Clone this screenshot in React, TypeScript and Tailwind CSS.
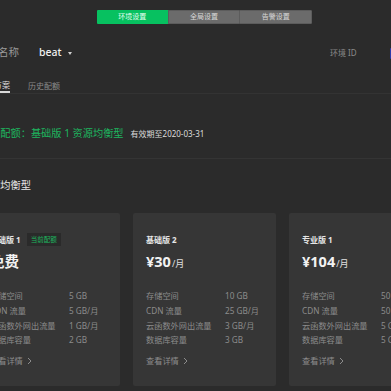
const font = '[font-family:"Noto_Sans","Noto_Sans_CJK_SC",sans-serif]'

type Plan = {
  name: string
  price: string
  unit?: string
  current?: boolean
  specs: [string, string][]
}

const plans: Plan[] = [
  {
    name: '基础版 1',
    price: '免费',
    current: true,
    specs: [
      ['存储空间', '5 GB'],
      ['CDN 流量', '5 GB/月'],
      ['云函数外网出流量', '1 GB/月'],
      ['数据库容量', '2 GB'],
    ],
  },
  {
    name: '基础版 2',
    price: '¥30',
    unit: '/月',
    specs: [
      ['存储空间', '10 GB'],
      ['CDN 流量', '25 GB/月'],
      ['云函数外网出流量', '3 GB/月'],
      ['数据库容量', '3 GB'],
    ],
  },
  {
    name: '专业版 1',
    price: '¥104',
    unit: '/月',
    specs: [
      ['存储空间', '50 GB'],
      ['CDN 流量', '50 GB/月'],
      ['云函数外网出流量', '5 GB/月'],
      ['数据库容量', '5 GB'],
    ],
  },
]

function PlanCard({ plan }: { plan: Plan }) {
  return (
    <div className="w-[143px] h-[173px] shrink-0 rounded-[2px] bg-[#363636] px-[13px] pt-[20px]">
      {/* title + badge */}
      <div className="flex h-[13px] items-center gap-[6px]">
        <span className="text-[8px] font-bold text-[#e6e6e6]">{plan.name}</span>
        {plan.current && (
          <span className="flex h-[13px] items-center bg-[#2a2a2a] px-[4px] text-[6.5px] text-[#1db65f]">
            当前配额
          </span>
        )}
      </div>

      {/* price */}
      <div className="mt-[5px] flex h-[20px] items-baseline">
        <span className="text-[14.5px] font-bold leading-[20px] text-[#f2f2f2]">{plan.price}</span>
        {plan.unit && <span className="ml-[1px] text-[9px] text-[#e0e0e0]">{plan.unit}</span>}
      </div>

      {/* specs */}
      <div className="mt-[18px]">
        {plan.specs.map(([k, v]) => (
          <div key={k} className="flex h-[14.7px] items-center text-[8.2px] text-[#8c8c8c]">
            <span className="w-[79px] shrink-0 whitespace-nowrap">{k}</span>
            <span className="whitespace-nowrap">{v}</span>
          </div>
        ))}
      </div>

      <div className="mt-[6px] flex h-[14px] items-center gap-[4px] text-[8.2px] text-[#8c8c8c]">
        查看详情
        <svg width="5" height="8" viewBox="0 0 5 8" fill="none" stroke="#8c8c8c" strokeWidth="1">
          <path d="M1 1l3 3-3 3" />
        </svg>
      </div>
    </div>
  )
}

export default function App() {
  return (
    <div className={`w-[391px] h-[391px] overflow-hidden bg-[#2b2b2b] ${font}`}>
      {/* segmented control */}
      <div className="pl-[97px] pt-[10px]">
        <div className="flex h-[14px] w-[215px] text-[7px]">
          <div className="flex flex-1 items-center justify-center rounded-l-[1px] bg-[#07c160] text-[#e8fff1]">
            环境设置
          </div>
          <div className="flex flex-1 items-center justify-center border-y border-l border-[#5c5c5c] bg-[#6b6b6b] text-[#d8d8d8]">
            全局设置
          </div>
          <div className="flex flex-1 items-center justify-center rounded-r-[1px] border border-[#5c5c5c] bg-[#6b6b6b] text-[#d8d8d8]">
            告警设置
          </div>
        </div>
      </div>

      {/* name row */}
      <div className="mt-[19px] flex h-[20px] w-[460px] items-center whitespace-nowrap -ml-[23px]">
        <span className="w-[42px] shrink-0 text-[10.5px] text-[#9a9a9a]">环境名称</span>
        <span className="ml-[20px] shrink-0 text-[10.5px] font-medium text-[#f0f0f0]">beat</span>
        <svg className="ml-[6px] shrink-0" width="4" height="3" viewBox="0 0 4 3">
          <path d="M0 0h4L2 3z" fill="#d0d0d0" />
        </svg>
        <div className="ml-auto mr-[27px] flex shrink-0 items-center">
          <span className="w-[60px] shrink-0 text-[8px] text-[#8a8a8a]">环境 ID</span>
          <span className="h-[11px] w-[20px] shrink-0 rounded-[1px] bg-[#2d3aa8]" />
        </div>
      </div>

      {/* sub tabs */}
      <div className="mt-[14px] flex h-[17px] border-b border-[#333333] -ml-[22px] w-[413px]">
        <div className="flex h-full items-center border-b-[2px] border-[#d9d9d9] pt-[2px] text-[8px] text-[#e0e0e0]">
          当前方案
        </div>
        <div className="ml-[18px] flex h-full items-center pt-[2px] text-[8px] text-[#8a8a8a]">历史配额</div>
      </div>

      {/* current quota */}
      <div className="h-[65px] border-b border-[#343434] pt-[32px]">
        <div className="-ml-[20px] flex h-[14px] items-baseline whitespace-nowrap">
          <span className="text-[10.2px] text-[#1db65f]">当前配额：基础版 1 资源均衡型</span>
          <span className="ml-[7px] text-[8px] text-[#dcdcdc]">有效期至2020-03-31</span>
        </div>
      </div>

      {/* plan group */}
      <div className="-ml-[20px] mt-[20px] flex h-[14px] items-center whitespace-nowrap text-[10.2px] text-[#e8e8e8]">
        资源均衡型
      </div>

      <div className="-ml-[23px] mt-[20px] flex gap-[13px]">
        {plans.map((p) => (
          <PlanCard key={p.name} plan={p} />
        ))}
      </div>
    </div>
  )
}
